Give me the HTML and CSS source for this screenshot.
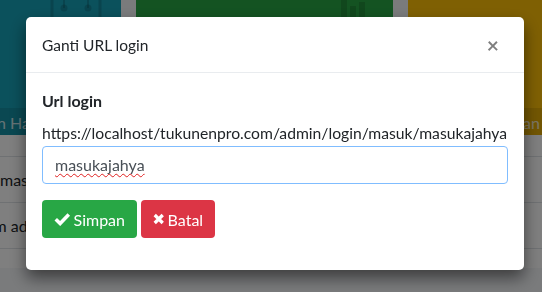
FILE: index.html
```html
<!DOCTYPE html>
<html lang="id">

<head>
    <meta charset="UTF-8">
    <meta name="viewport" content="width=device-width, initial-scale=1.0">
    <title>Ganti URL login</title>
    <link rel="stylesheet" href="styles.css">
</head>

<body>
    <div class="page">
        <div class="boxes">
            <div class="small-box bg-info">
                <div class="inner">
                    <svg class="box-icon bag" width="60" height="20" viewBox="0 0 60 20">
                        <path d="M6 0 V20 M54 0 V20" stroke="rgba(0,0,0,0.15)" stroke-width="3" fill="none" />
                        <circle cx="18" cy="8" r="3.5" fill="rgba(0,0,0,0.15)" />
                        <circle cx="42" cy="8" r="3.5" fill="rgba(0,0,0,0.15)" />
                        <path d="M18 8 V0 M42 8 V0" stroke="rgba(0,0,0,0.15)" stroke-width="2" />
                    </svg>
                </div>
                <div class="box-footer">Pengaturan Harga</div>
            </div>
            <div class="small-box bg-success">
                <div class="inner">
                    <svg class="box-icon chart" width="30" height="20" viewBox="0 0 30 20">
                        <rect x="0" y="0" width="6" height="20" fill="rgba(0,0,0,0.15)" />
                        <rect x="9" y="6" width="6" height="14" fill="rgba(0,0,0,0.15)" />
                        <rect x="18" y="2" width="6" height="18" fill="rgba(0,0,0,0.15)" />
                    </svg>
                </div>
                <div class="box-footer">Laporan Penjualan</div>
            </div>
            <div class="small-box bg-warning">
                <div class="inner"></div>
                <div class="box-footer">Pengaturan lain</div>
            </div>
        </div>

        <div class="card">
            <table class="table">
                <thead>
                    <tr>
                        <th>URL</th>
                    </tr>
                </thead>
                <tbody>
                    <tr>
                        <td>masukajahya</td>
                    </tr>
                    <tr>
                        <td class="cut">Sistem admin</td>
                    </tr>
                </tbody>
            </table>
        </div>
    </div>

    <div class="dim">
        <div class="modal-content">
            <div class="modal-header">
                <h4 class="modal-title">Ganti URL login</h4>
                <button class="close" type="button">&times;</button>
            </div>
            <div class="modal-body">
                <div class="form-group">
                    <label for="urlLogin">Url login</label>
                    <p class="url-preview">https://localhost/tukunenpro.com/admin/login/masuk/masukajahya</p>
                    <div id="urlLogin" class="form-control" contenteditable="true" spellcheck="false"><span class="typo">masukajahya</span></div>
                </div>
                <div class="form-group">
                    <button class="btn btn-success" type="button">
                        <svg width="17" height="14" viewBox="0 0 17 14">
                            <path d="M1.8 7.2 L6.3 11.7 L15.2 2.3" stroke="#fff" stroke-width="3.6" fill="none" />
                        </svg>
                        Simpan
                    </button>
                    <button class="btn btn-danger" type="button">
                        <svg width="12" height="12" viewBox="0 0 12 12">
                            <path d="M1.8 1.8 L10.2 10.2 M10.2 1.8 L1.8 10.2" stroke="#fff" stroke-width="3.4" fill="none" />
                        </svg>
                        Batal
                    </button>
                </div>
            </div>
        </div>
    </div>
</body>

</html>
```

FILE: styles.css
```css
html,
body {
    margin: 0;
    width: 542px;
    height: 292px;
    overflow: hidden;
}

body {
    background-color: #f4f6f9;
    font-family: "Lato", "Liberation Sans", sans-serif;
    font-size: 16px;
    color: #212529;
}

.boxes {
    display: grid;
    grid-template-columns: 121px 257px 1fr;
    gap: 15px;
}

.small-box {
    color: #fff;
    overflow: hidden;
}

.bg-info {
    background-color: #17a2b8;
}

.bg-success {
    background-color: #28a745;
}

.bg-warning {
    background-color: #ffc107;
}

.small-box .inner {
    display: flex;
    align-items: flex-start;
    height: 108px;
}

.box-icon.bag {
    margin-left: 46px;
}

.box-icon.chart {
    margin-left: auto;
    margin-right: 22px;
}

.box-footer {
    height: 24px;
    padding-top: 3px;
    line-height: 24px;
    background-color: rgba(0, 0, 0, 0.1);
    color: rgba(255, 255, 255, 0.8);
    white-space: nowrap;
    overflow: hidden;
}

.bg-info .box-footer {
    text-indent: -74px;
}

.bg-success .box-footer {
    text-align: center;
}

.bg-warning .box-footer {
    text-indent: 52px;
}

.card {
    background-color: #fff;
    height: 133px;
    overflow: hidden;
}

.table {
    width: 100%;
    border-collapse: collapse;
}

.table th,
.table td {
    text-align: left;
    padding: 0;
    border-bottom: 1px solid #dee2e6;
    white-space: nowrap;
}

.table th {
    height: 21px;
    font-weight: 700;
    color: transparent;
}

.table td {
    height: 45px;
}

.table td.cut {
    text-indent: -40px;
}

.dim {
    position: fixed;
    top: 0;
    left: 0;
    width: 542px;
    height: 292px;
    background-color: rgba(0, 0, 0, 0.5);
}

.modal-content {
    width: 498px;
    margin: 17px 0 0 26px;
    background-color: #fff;
    border-radius: 5px;
    box-shadow: 0 8px 16px rgba(0, 0, 0, 0.5);
}

.modal-header {
    display: flex;
    align-items: center;
    justify-content: space-between;
    padding: 16px 16px 15px;
    border-bottom: 1px solid #e9ecef;
}

.modal-title {
    margin: 0;
    font-size: 15.5px;
    font-weight: 400;
    line-height: 24px;
}

.close {
    border: none;
    background: none;
    padding: 0 9px 0 0;
    font-family: "Lato", sans-serif;
    font-size: 21px;
    font-weight: 700;
    line-height: 24px;
    color: #000;
    opacity: 0.5;
}

.modal-body {
    padding: 16px;
}

.form-group {
    margin-bottom: 16px;
}

.form-group label {
    display: block;
    font-weight: 700;
    line-height: 24px;
    margin-bottom: 8px;
}

.url-preview {
    margin: 0;
    font-size: 15.7px;
    line-height: 24px;
    white-space: nowrap;
}

.form-control {
    box-sizing: border-box;
    width: 100%;
    height: 38px;
    margin-top: 1px;
    padding: 6px 12px;
    font-size: 16px;
    line-height: 24px;
    color: #495057;
    border: 1px solid #80bdff;
    border-radius: 4px;
    outline: none;
}

.typo {
    text-decoration: underline wavy #e02020;
    text-decoration-thickness: 1px;
    text-decoration-skip-ink: none;
    text-underline-offset: 2px;
}

.btn {
    display: inline-flex;
    align-items: center;
    gap: 3px;
    height: 38px;
    padding: 0 12px;
    border: none;
    border-radius: 4px;
    color: #fff;
    font-family: inherit;
    font-size: 16px;
    vertical-align: top;
}

.btn-success {
    background-color: #28a745;
    width: 95px;
}

.btn-danger {
    background-color: #dc3545;
    width: 74px;
}
```
